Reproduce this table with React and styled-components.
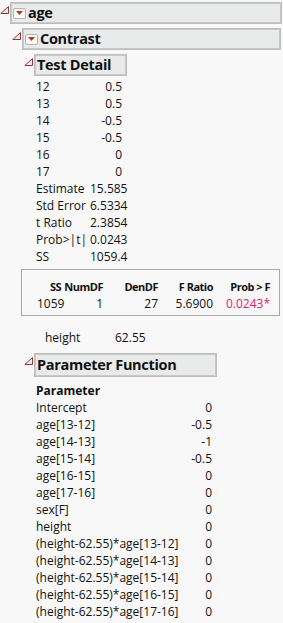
import React from 'react';
import styled, { createGlobalStyle } from 'styled-components';

const GlobalStyle = createGlobalStyle`
  html, body {
    margin: 0;
    padding: 0;
    background: #f8f8f8;
  }
  body {
    font-family: 'Open Sans', 'Noto Sans', sans-serif;
    font-size: 12px;
    color: #111;
  }
`;

const Page = styled.div`
  width: 283px;
  height: 623px;
  overflow: hidden;
  padding-top: 2px;
  box-sizing: border-box;
`;

const Node = styled.div`
  display: flex;
  flex-direction: column;
`;

const HeadRow = styled.div`
  display: flex;
  align-items: flex-start;
`;

const Twisty = styled.svg`
  width: 9px;
  height: 8px;
  margin-top: 4px;
  margin-right: 1px;
  flex: none;
`;

const HeadBox = styled.div`
  display: flex;
  align-items: center;
  gap: 2px;
  box-sizing: border-box;
  height: ${(p) => p.$h || 22}px;
  width: ${(p) => (p.$w ? `${p.$w}px` : 'auto')};
  flex: ${(p) => (p.$w ? 'none' : '1')};
  margin-right: ${(p) => p.$mr || 0}px;
  padding-left: 2px;
  background: #e9ebea;
  border: 1px solid #bdbdbd;
  box-shadow: inset 0 0 0 1px #c8c8c8;
`;

const Title = styled.span`
  font-weight: 700;
  font-size: 14.5px;
  line-height: 20px;
  color: #111;
  letter-spacing: -0.3px;
`;

const MenuBtn = styled.span`
  display: flex;
  align-items: center;
  justify-content: center;
  width: 13px;
  height: 11px;
  box-sizing: border-box;
  border: 1px solid #b4b4b4;
  border-radius: 2px;
  background: #fbfbfb;
  flex: none;
`;

const Body = styled.div`
  display: flex;
  flex-direction: column;
  padding-left: ${(p) => p.$indent ?? 12}px;
  padding-top: ${(p) => p.$top ?? 4}px;
`;

const KVGrid = styled.div`
  display: grid;
  grid-template-columns: ${(p) => p.$cols};
  line-height: 17px;
`;

const Cell = styled.span`
  text-align: ${(p) => (p.$right ? 'right' : 'left')};
  font-weight: ${(p) => (p.$bold ? 700 : 400)};
  white-space: nowrap;
`;

const HeadCell = styled.span`
  text-align: right;
  font-weight: 700;
  font-size: 11px;
  letter-spacing: -0.5px;
  white-space: nowrap;
`;

const TableBox = styled.div`
  margin: 4px 3px 0 -3px;
  border: 1px solid #a8a8a8;
  padding: 8px 0 3px 15px;
`;

const TableGrid = styled.div`
  display: grid;
  grid-template-columns: 24px 42px 55px 55px 57px;
  line-height: 17px;
`;

const Signif = styled.span`
  color: #e2226c;
`;

const FactorRow = styled.div`
  display: grid;
  grid-template-columns: 70px auto;
  padding-left: 21px;
  margin-top: 13px;
  margin-bottom: 7px;
  line-height: 17px;
`;

function Disclosure() {
  return (
    <Twisty viewBox="0 0 9 8">
      <polygon points="0.8,7.5 8.5,7.5 8.5,0.6" fill="#f4e6e8" stroke="#8e3a3a" strokeWidth="1" />
    </Twisty>
  );
}

function RedMenu() {
  return (
    <MenuBtn>
      <svg width="7" height="4" viewBox="0 0 7 4">
        <polygon points="0,0 7,0 3.5,4" fill="#c0321b" />
      </svg>
    </MenuBtn>
  );
}

function Outline({ title, menu, width, mr, h, indent, top, children }) {
  return (
    <Node>
      <HeadRow>
        <Disclosure />
        <HeadBox $w={width} $mr={mr} $h={h}>
          {menu && <RedMenu />}
          <Title>{title}</Title>
        </HeadBox>
      </HeadRow>
      <Body $indent={indent} $top={top}>
        {children}
      </Body>
    </Node>
  );
}

const testRows = [
  ['12', '0.5'],
  ['13', '0.5'],
  ['14', '-0.5'],
  ['15', '-0.5'],
  ['16', '0'],
  ['17', '0'],
];

const statRows = [
  ['Estimate', '15.585'],
  ['Std Error', '6.5334'],
  ['t Ratio', '2.3854'],
  ['Prob>|t|', '0.0243'],
  ['SS', '1059.4'],
];

const paramRows = [
  ['Intercept', '0'],
  ['age[13-12]', '-0.5'],
  ['age[14-13]', '-1'],
  ['age[15-14]', '-0.5'],
  ['age[16-15]', '0'],
  ['age[17-16]', '0'],
  ['sex[F]', '0'],
  ['height', '0'],
  ['(height-62.55)*age[13-12]', '0'],
  ['(height-62.55)*age[14-13]', '0'],
  ['(height-62.55)*age[15-14]', '0'],
  ['(height-62.55)*age[16-15]', '0'],
  ['(height-62.55)*age[17-16]', '0'],
];

export default function App() {
  return (
    <Page>
      <GlobalStyle />
      <Outline title="age" menu mr={1}>
        <Outline title="Contrast" menu mr={2}>
          <Outline title="Test Detail" width={93} top={2}>
            <KVGrid $cols="52px 34px">
              {testRows.map(([k, v]) => (
                <React.Fragment key={k}>
                  <Cell>{k}</Cell>
                  <Cell $right>{v}</Cell>
                </React.Fragment>
              ))}
            </KVGrid>
            <KVGrid $cols="54px auto">
              {statRows.map(([k, v]) => (
                <React.Fragment key={k}>
                  <Cell>{k}</Cell>
                  <Cell>{v}</Cell>
                </React.Fragment>
              ))}
            </KVGrid>
          </Outline>
          <TableBox>
            <TableGrid>
              <HeadCell>SS</HeadCell>
              <HeadCell>NumDF</HeadCell>
              <HeadCell>DenDF</HeadCell>
              <HeadCell>F Ratio</HeadCell>
              <HeadCell>Prob &gt; F</HeadCell>
              <Cell $right>1059</Cell>
              <Cell $right>1</Cell>
              <Cell $right>27</Cell>
              <Cell $right>5.6900</Cell>
              <Cell $right>
                <Signif>0.0243*</Signif>
              </Cell>
            </TableGrid>
          </TableBox>
          <FactorRow>
            <Cell>height</Cell>
            <Cell>62.55</Cell>
          </FactorRow>
          <Outline title="Parameter Function" width={183} h={24} top={5}>
            <KVGrid $cols="150px 26px">
              <Cell $bold>Parameter</Cell>
              <Cell />
              {paramRows.map(([k, v]) => (
                <React.Fragment key={k}>
                  <Cell>{k}</Cell>
                  <Cell $right>{v}</Cell>
                </React.Fragment>
              ))}
            </KVGrid>
          </Outline>
        </Outline>
      </Outline>
    </Page>
  );
}
